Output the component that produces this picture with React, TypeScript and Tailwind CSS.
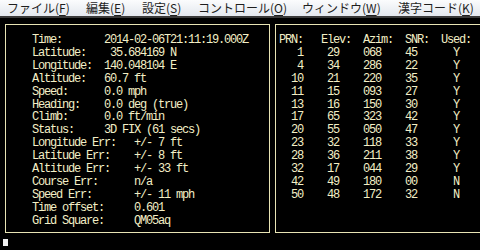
const menus = [
  { label: "ファイル", key: "F", w: "w-[79px]" },
  { label: "編集", key: "E", w: "w-[56px]" },
  { label: "設定", key: "S", w: "w-[56px]" },
  { label: "コントロール", key: "O", w: "w-[104px]" },
  { label: "ウィンドウ", key: "W", w: "w-[96px]" },
  { label: "漢字コード", key: "K", w: "w-[80px]" },
];

const fixLines = [
  "Time:       2014-02-06T21:11:19.000Z",
  "Latitude:    35.684169 N",
  "Longitude:  140.048104 E",
  "Altitude:   60.7 ft",
  "Speed:      0.0 mph",
  "Heading:    0.0 deg (true)",
  "Climb:      0.0 ft/min",
  "Status:     3D FIX (61 secs)",
  "Longitude Err:   +/- 7 ft",
  "Latitude Err:    +/- 8 ft",
  "Altitude Err:    +/- 33 ft",
  "Course Err:      n/a",
  "Speed Err:       +/- 11 mph",
  "Time offset:     0.601",
  "Grid Square:     QM05aq",
];

const sats = [
  [1, 29, "068", 45, "Y"],
  [4, 34, "286", 22, "Y"],
  [10, 21, "220", 35, "Y"],
  [11, 15, "093", 27, "Y"],
  [13, 16, "150", 30, "Y"],
  [17, 65, "323", 42, "Y"],
  [20, 55, "050", 47, "Y"],
  [23, 32, "118", 33, "Y"],
  [28, 36, "211", 38, "Y"],
  [32, 17, "044", 29, "Y"],
  [42, 49, "180", "00", "N"],
  [50, 48, "172", 32, "N"],
];

// fixed-width columns, like the curses layout
function satLine(s: (string | number)[]) {
  const [prn, el, az, snr, used] = s.map(String);
  return (
    prn.padStart(4) +
    "    " +
    el.padEnd(6) +
    az.padEnd(7) +
    snr.padEnd(8) +
    used
  );
}

export default function App() {
  return (
    <div className="w-[480px] h-[250px] bg-black overflow-hidden">
      {/* menu bar */}
      <div className="h-[18px] bg-gradient-to-b from-[#fbfcfd] to-[#e4e8ee] border-b-[2px] border-[#3a3a3a] flex items-center pl-[7px] text-[12px] text-[#1e1e1e] whitespace-nowrap font-['Noto_Sans_CJK_JP',sans-serif] leading-none">
        {menus.map((m) => (
          <span key={m.key} className={`${m.w} shrink-0`}>
            {m.label}(<span className="underline underline-offset-2">{m.key}</span>)
          </span>
        ))}
      </div>

      <div className="flex gap-[5px] pl-[5px] pt-[6px] text-[#f3efc6] font-['Liberation_Mono',monospace] text-[12px] tracking-[-1.2px] leading-[12.9px] whitespace-pre">
        <div className="w-[265px] h-[209px] shrink-0 border border-[#e8e4b4] pl-[26px] pt-[9px]">
          {fixLines.map((l, i) => (
            <div key={i}>{l}</div>
          ))}
        </div>
        <div className="w-[220px] h-[209px] shrink-0 border border-[#e8e4b4] pl-[3px] pt-[9px]">
          <div>{"PRN:   Elev:  Azim:  SNR:  Used:"}</div>
          {sats.map((s, i) => (
            <div key={i}>{satLine(s)}</div>
          ))}
        </div>
      </div>

      <div className="ml-[3px] mt-[6px] w-[5px] h-[7px] bg-[#f0f0f0]" />
    </div>
  );
}
